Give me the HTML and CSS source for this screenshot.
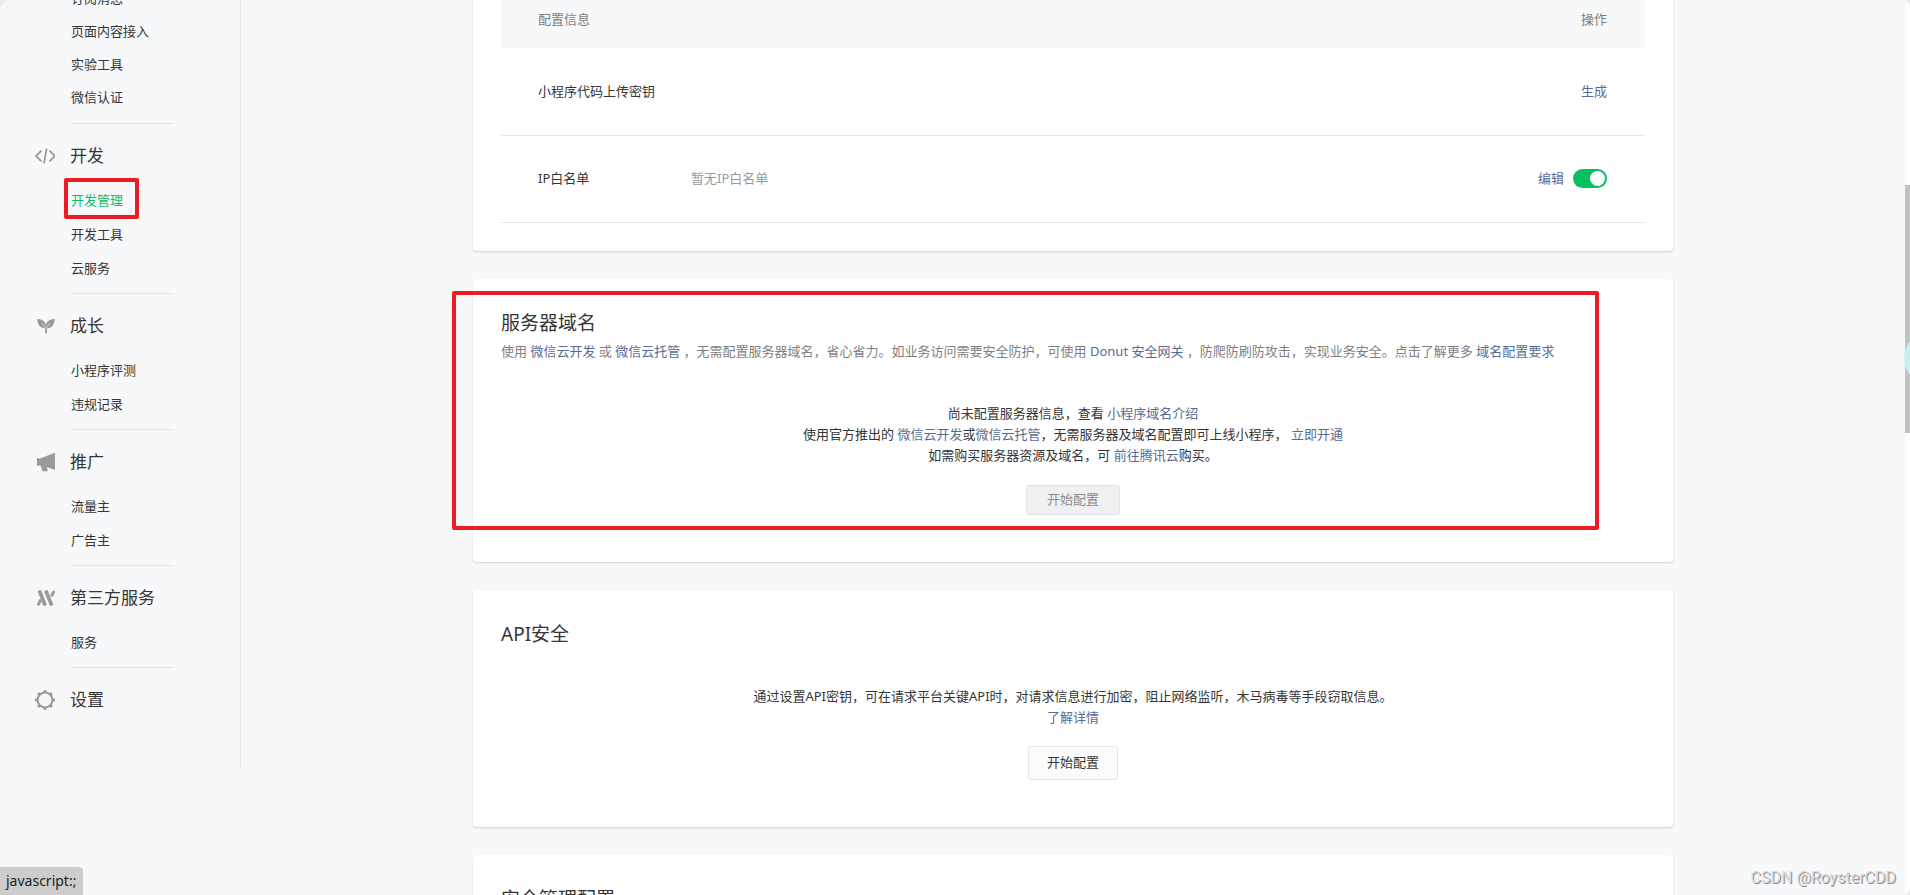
FILE: index.html
```html
<!DOCTYPE html>
<html lang="zh-CN">
<head>
<meta charset="utf-8">
<title>开发管理</title>
<link rel="stylesheet" href="styles.css">
</head>
<body>
<div class="window">
  <nav class="sidebar">
    <section class="group group-compact">
      <ul class="menu">
        <li><a href="#">订阅消息</a></li>
        <li><a href="#">页面内容接入</a></li>
        <li><a href="#">实验工具</a></li>
        <li><a href="#">微信认证</a></li>
      </ul>
    </section>
    <section class="group">
      <h2 class="group-title">
        <svg class="icon" viewBox="0 0 20 20" fill="none" stroke="#9a9a9a" stroke-width="1.800"><path d="M6.400 4.600 1 10l5.400 5.400M14.500 4.600l5.400 5.400-5.400 5.400M11.600 2.600 9 17.400"/></svg>
        开发
      </h2>
      <ul class="menu">
        <li><a class="active" href="#">开发管理<span class="mark mark-menu"></span></a></li>
        <li><a href="#">开发工具</a></li>
        <li><a href="#">云服务</a></li>
      </ul>
    </section>
    <section class="group">
      <h2 class="group-title">
        <svg class="icon" viewBox="0 0 20 20" fill="#9a9a9a"><path d="M2.400 3C7 3 10.400 5.300 10.900 9.200 11.500 5.300 14.800 3 19.600 3 19.600 9 16.600 12.400 12 12.400V17.400H10.200v-5.200C5.400 12.200 2.400 8.800 2.400 3Z"/><path d="m7.400 7.400 3.600 5M14.800 7.400l-3.700 5" fill="none" stroke="#f7f8fa" stroke-width=".6"/></svg>
        成长
      </h2>
      <ul class="menu">
        <li><a href="#">小程序评测</a></li>
        <li><a href="#">违规记录</a></li>
      </ul>
    </section>
    <section class="group">
      <h2 class="group-title">
        <svg class="icon" viewBox="0 0 20 20" fill="#9a9a9a"><path d="M2 6h1.800v.9L20 .800v17.200l-8-3 .800 4.200H7.600l-1.900-5.400-1.900-.700v.9H2Z"/></svg>
        推广
      </h2>
      <ul class="menu">
        <li><a href="#">流量主</a></li>
        <li><a href="#">广告主</a></li>
      </ul>
    </section>
    <section class="group">
      <h2 class="group-title">
        <svg class="icon" viewBox="0 0 20 20" fill="none" stroke="#9a9a9a" stroke-width="3.800" stroke-linecap="round"><path d="m4.800 3.900 4.900 12.200M11.300 3.900l4.900 12.200"/><path d="m3.600 16.200 1.700-3.600M16.900 7.200l1.700-3.200" stroke-width="3"/></svg>
        第三方服务
      </h2>
      <ul class="menu">
        <li><a href="#">服务</a></li>
      </ul>
    </section>
    <section class="group">
      <h2 class="group-title">
        <svg class="icon" viewBox="0 0 20 20" fill="none" stroke="#9a9a9a"><circle cx="10" cy="10" r="7.400" stroke-width="2"/><path stroke-width="2.800" d="M10 0v3M10 17v3M0 10h3M17 10h3M3.100 3.100l1.800 1.800M15.100 15.100l1.800 1.800M3.100 16.900l1.800-1.800M15.100 4.900l1.800-1.800"/></svg>
        设置
      </h2>
    </section>
  </nav>

  <main class="content">
    <section class="card card-first">
      <table class="settings">
        <thead>
          <tr><th colspan="2">配置信息</th><th class="ops">操作</th></tr>
        </thead>
        <tbody>
          <tr><td colspan="2">小程序代码上传密钥</td><td class="ops"><a href="#">生成</a></td></tr>
          <tr>
            <td class="name"><label for="ip-switch">IP白名单</label></td>
            <td class="value">暂无IP白名单</td>
            <td class="ops"><div class="ops-row"><a href="#">编辑</a><input class="switch" id="ip-switch" type="checkbox" checked></div></td>
          </tr>
        </tbody>
      </table>
    </section>

    <section class="card">
      <h3 class="card-title">服务器域名</h3>
      <p class="card-desc">使用 <a href="#">微信云开发</a> 或 <a href="#">微信云托管</a> ，无需配置服务器域名，省心省力。如业务访问需要安全防护，可使用 <a href="#">Donut 安全网关</a> ，防爬防刷防攻击，实现业务安全。点击了解更多 <a href="#">域名配置要求</a></p>
      <div class="empty empty-domain">
        <p>尚未配置服务器信息，查看 <a href="#">小程序域名介绍</a></p>
        <p>使用官方推出的 <a href="#">微信云开发</a>或<a href="#">微信云托管</a>，无需服务器及域名配置即可上线小程序， <a href="#">立即开通</a></p>
        <p>如需购买服务器资源及域名，可 <a href="#">前往腾讯云</a>购买。</p>
        <button class="btn" type="button" disabled>开始配置</button>
      </div>
      <span class="mark mark-card"></span>
    </section>

    <section class="card">
      <h3 class="card-title">API安全</h3>
      <div class="empty">
        <p>通过设置API密钥，可在请求平台关键API时，对请求信息进行加密，阻止网络监听，木马病毒等手段窃取信息。</p>
        <p><a href="#">了解详情</a></p>
        <button class="btn" type="button">开始配置</button>
      </div>
    </section>

    <section class="card">
      <h3 class="card-title">安全管理配置</h3>
    </section>
  </main>

  <div class="scrollbar"><div class="thumb"></div></div>
  <div class="float-ball"></div>
  <div class="status">javascript:;</div>
  <div class="watermark">CSDN @RoysterCDD</div>
</div>
</body>
</html>
```
FILE: styles.css
```css
* {
  box-sizing: border-box;
}

body {
  margin: 0;
  background: #ececec;
  color: #353535;
  font: 13px/21px "Noto Sans", "Noto Sans CJK SC", sans-serif;
}

h2, h3, p, ul {
  margin: 0;
  padding: 0;
  font-weight: 400;
}

ul {
  list-style: none;
}

a {
  color: #576b95;
  text-decoration: none;
}

.window {
  position: relative;
  display: flex;
  height: 100vh;
  overflow: hidden;
  border-radius: 10px 8px 8px 0;
  background: #f7f8fa;
}

/* Sidebar */
.sidebar {
  flex: none;
  align-self: flex-start;
  width: 241px;
  margin-top: -18px;
  padding-bottom: 57px;
  border-right: 1px solid #e4e5e7;
}

.menu {
  width: 103px;
  margin: 15px 0 0 71px;
  padding-bottom: 8px;
  border-bottom: 1px solid #e4e5e7;
}

.menu li {
  height: 34px;
  line-height: 34px;
}

.menu a {
  position: relative;
  display: inline-block;
  color: #353535;
  white-space: nowrap;
}

.menu a.active {
  color: #07c160;
}

.group-compact .menu {
  margin-top: 0;
  padding-bottom: 9px;
}

.group-compact li {
  height: 33px;
  line-height: 33px;
}

.group-title {
  display: flex;
  align-items: center;
  gap: 15px;
  height: 24px;
  margin-top: 20px;
  padding-left: 35px;
  font-size: 17px;
  line-height: 24px;
}

.icon {
  flex: none;
  width: 20px;
  height: 20px;
}

/* Cards */
.content {
  flex: 1;
  display: flex;
  flex-direction: column;
  align-items: center;
  gap: 28px;
  min-width: 0;
}

.card {
  position: relative;
  flex: none;
  width: 100%;
  max-width: 1200px;
  padding: 28px 28px 47px;
  border-radius: 4px;
  background: #fff;
  box-shadow: 0 1px 2px rgba(120, 125, 135, 0.3);
}

.card-first {
  margin-top: -37px;
  padding-bottom: 28px;
}

.card-title {
  font-size: 19px;
  line-height: 32px;
}

.card-desc {
  color: #7f7f7f;
  line-height: 24px;
}

.empty {
  margin-top: 36px;
  text-align: center;
}

.empty-domain {
  margin-top: 40px;
}

.btn {
  display: block;
  height: 34px;
  margin: 18px auto 0;
  padding: 0 18px;
  border: 1px solid #e4e6e9;
  border-radius: 3px;
  background: #fbfbfb;
  color: #353535;
  font: inherit;
}

.btn:disabled {
  height: 30px;
  margin-top: 19px;
  padding: 0 20px;
  border-color: #e2e4e7;
  background: #eff0f2;
  color: #8c8c8c;
}

/* Settings table */
.settings {
  width: 100%;
  border-collapse: collapse;
}

.settings th,
.settings td {
  height: 87px;
  padding: 0 0 0 37px;
  border-bottom: 1px solid #e4e5e7;
  text-align: left;
}

.settings th {
  height: 57px;
  border: 0;
  background: #f6f8fa;
  color: #7f7f7f;
  font-weight: 400;
}

.settings .name {
  width: 190px;
}

.settings .value {
  padding-left: 0;
  color: #9a9a9a;
}

.settings .ops {
  padding: 0 38px 0 0;
  text-align: right;
}

.ops-row {
  display: flex;
  align-items: center;
  justify-content: flex-end;
  gap: 9px;
}

.switch {
  appearance: none;
  width: 34px;
  height: 19px;
  margin: 0;
  padding: 2px;
  border-radius: 10px;
  background: #07c160;
}

.switch::before {
  content: "";
  display: block;
  width: 15px;
  height: 15px;
  margin-left: auto;
  border-radius: 50%;
  background: #fff;
}

/* Highlight frames */
.mark {
  position: absolute;
  border: 4px solid #ed1c24;
  border-radius: 2px;
  pointer-events: none;
}

.mark-menu {
  inset: -5px -16px -2px -7px;
}

.mark-card {
  inset: 12px 74px 32px -21px;
}

/* Browser overlays */
.scrollbar {
  flex: none;
  width: 5px;
  padding-top: 185px;
  background: #fff;
}

.thumb {
  height: 248px;
  background: #c1c1c1;
}

.float-ball {
  position: absolute;
  top: 331px;
  right: -48px;
  width: 54px;
  height: 54px;
  border-radius: 50%;
  background: #c3f2ec;
}

.status {
  position: absolute;
  bottom: 0;
  left: 0;
  height: 28px;
  padding: 0 7px 0 6px;
  border-radius: 0 4px 0 0;
  background: #cdcdcd;
  color: #1c1c1c;
  font-size: 14px;
  line-height: 28px;
}

.watermark {
  position: absolute;
  right: 14px;
  bottom: 5px;
  color: #dcdcdc;
  font: 16px/24px Roboto, sans-serif;
  text-shadow: 1px 1px 0 #8a8a8a;
}
```
